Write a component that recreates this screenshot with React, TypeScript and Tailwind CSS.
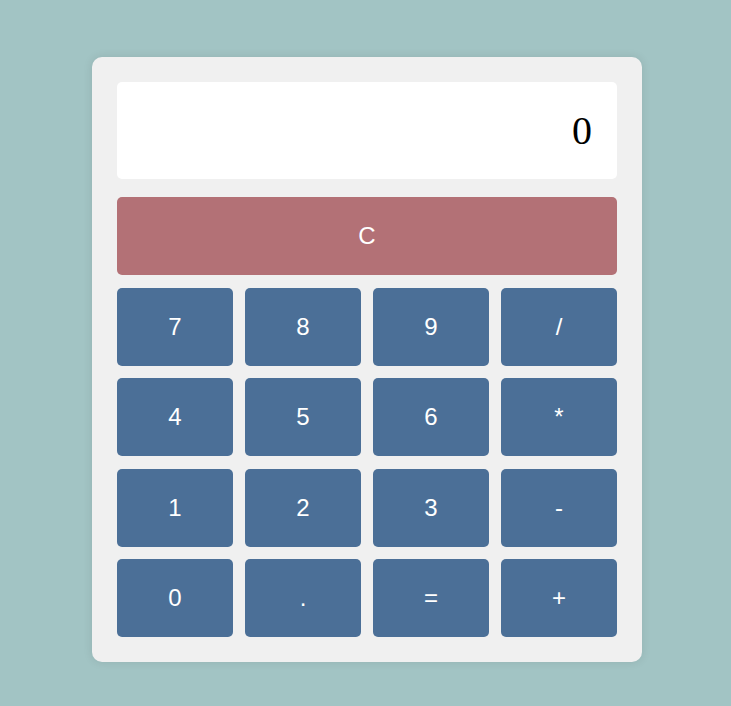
import React, { useState } from 'react'

const KEYS = ['7', '8', '9', '/', '4', '5', '6', '*', '1', '2', '3', '-', '0', '.', '=', '+']

export default function App() {
  const [display, setDisplay] = useState('0')

  const press = (k: string) => {
    if (k === '=') {
      try {
        // eslint-disable-next-line no-new-func
        const r = Function(`return (${display})`)()
        setDisplay(String(r))
      } catch {
        setDisplay('Error')
      }
      return
    }
    setDisplay((d) => (d === '0' || d === 'Error' ? k : d + k))
  }

  return (
    <div className="min-h-screen w-full bg-[#a2c4c4] flex justify-center pt-[57px] pl-[3px]">
      <div className="w-[550px] h-[605px] bg-[#f0f0f0] rounded-[10px] p-[25px] shadow-[0_0_10px_rgba(0,0,0,0.1)]">
        {/* display */}
        <div className="h-[97px] bg-white rounded-[5px] flex items-center justify-end pr-[25px] text-[40px] text-black font-['Liberation_Serif',serif]">
          {display}
        </div>

        {/* clear */}
        <button
          onClick={() => setDisplay('0')}
          className="mt-[18px] w-full h-[78px] rounded-[5px] bg-[#b37176] text-white text-[24px] font-['Liberation_Sans',Arial,sans-serif]"
        >
          C
        </button>

        <div className="mt-[13px] grid grid-cols-4 gap-x-[12px] gap-y-[12.33px]">
          {KEYS.map((k) => (
            <button
              key={k}
              onClick={() => press(k)}
              className="h-[78px] rounded-[5px] bg-[#4b6f97] text-white text-[24px] font-['Liberation_Sans',Arial,sans-serif]"
            >
              {k}
            </button>
          ))}
        </div>
      </div>
    </div>
  )
}
